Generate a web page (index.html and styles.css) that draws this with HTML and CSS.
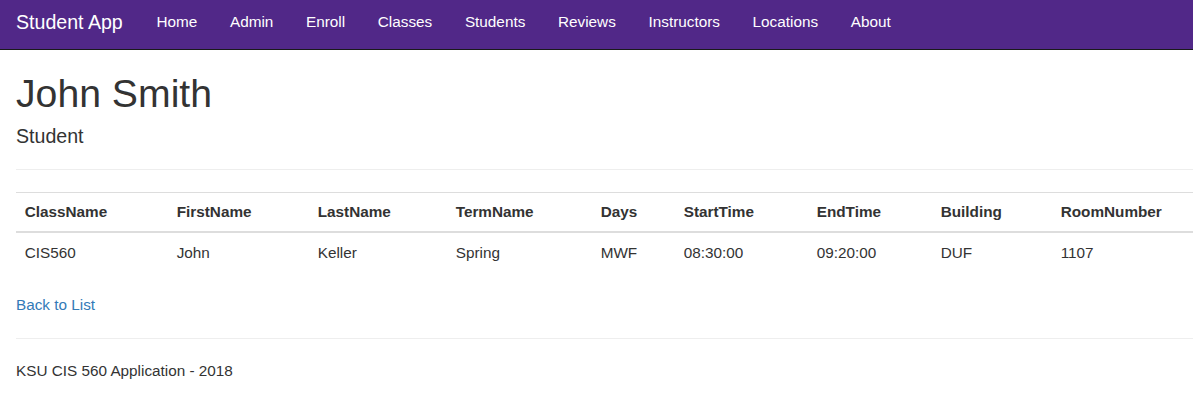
FILE: index.html
```html
<!DOCTYPE html>
<html lang="en">
<head>
<meta charset="utf-8">
<title>Student Details</title>
<link rel="stylesheet" href="styles.css">
</head>
<body>
<header class="navbar">
  <a class="brand" href="#">Student App</a>
  <nav class="nav">
    <a href="#">Home</a>
    <a href="#">Admin</a>
    <a href="#">Enroll</a>
    <a href="#">Classes</a>
    <a href="#">Students</a>
    <a href="#">Reviews</a>
    <a href="#">Instructors</a>
    <a href="#">Locations</a>
    <a href="#">About</a>
  </nav>
</header>
<main class="content">
  <h1 class="title">John Smith</h1>
  <h4 class="subtitle">Student</h4>
  <hr class="rule">
  <table class="table">
    <colgroup>
      <col class="c1"><col class="c2"><col class="c3"><col class="c4"><col class="c5"><col class="c6"><col class="c7"><col class="c8"><col>
    </colgroup>
    <thead>
      <tr>
        <th>ClassName</th>
        <th>FirstName</th>
        <th>LastName</th>
        <th>TermName</th>
        <th>Days</th>
        <th>StartTime</th>
        <th>EndTime</th>
        <th>Building</th>
        <th>RoomNumber</th>
      </tr>
    </thead>
    <tbody>
      <tr>
        <td>CIS560</td>
        <td>John</td>
        <td>Keller</td>
        <td>Spring</td>
        <td>MWF</td>
        <td>08:30:00</td>
        <td>09:20:00</td>
        <td>DUF</td>
        <td>1107</td>
      </tr>
    </tbody>
  </table>
  <p class="para"><a class="link" href="#">Back to List</a></p>
  <hr class="rule rule-bottom">
  <footer>
    <p class="para">KSU CIS 560 Application - 2018</p>
  </footer>
</main>
</body>
</html>
```
FILE: styles.css
```css
html, body {
  margin: 0;
  padding: 0;
  overflow: hidden;
}
body {
  font-family: "Liberation Sans", Arial, sans-serif;
  font-size: 15.3px;
  line-height: 1.42857;
  color: #333;
  background: #fff;
}
.navbar {
  display: flex;
  align-items: flex-start;
  height: 49px;
  background: #512888;
  border-bottom: 1px solid #1a1a1a;
}
.brand {
  padding: 12px 17.35px 0 16px;
  font-size: 19.6px;
  line-height: 21.8px;
  color: #fff;
  text-decoration: none;
}
.nav {
  display: flex;
}
.nav a {
  padding: 11px 16.35px 0;
  line-height: 21.8px;
  color: #fff;
  text-decoration: none;
}
.content {
  padding-left: 16px;
}
.title {
  margin: 21.8px 0 10.9px;
  font-size: 39.2px;
  font-weight: 500;
  line-height: 1.1;
}
.subtitle {
  margin: 10.9px 0 10.9px;
  font-size: 19.6px;
  font-weight: 500;
  line-height: 1.1;
}
.rule {
  margin: 21.8px 0;
  border: 0;
  border-top: 1px solid #eee;
  height: 0;
}
.rule-bottom {
  margin-top: 22.8px;
  margin-bottom: 20.5px;
}
.table {
  width: 100%;
  border-collapse: collapse;
  border-spacing: 0;
  margin-bottom: 21.5px;
  table-layout: fixed;
}
.c1 { width: 152px; }
.c2 { width: 141px; }
.c3 { width: 138px; }
.c4 { width: 145px; }
.c5 { width: 83px; }
.c6 { width: 133px; }
.c7 { width: 124px; }
.c8 { width: 120px; }
.table th,
.table td {
  padding: 8.5px 8.7px;
  text-align: left;
  line-height: 1.42857;
  white-space: nowrap;
}
.table th {
  padding-top: 7.8px;
  padding-bottom: 8.7px;
  font-weight: bold;
  vertical-align: bottom;
  border-top: 1px solid #ddd;
  border-bottom: 2px solid #ddd;
}
.table td {
  vertical-align: top;
}
.para {
  margin: 0 0 10.9px;
}
.link {
  color: #337ab7;
  text-decoration: none;
}
```
